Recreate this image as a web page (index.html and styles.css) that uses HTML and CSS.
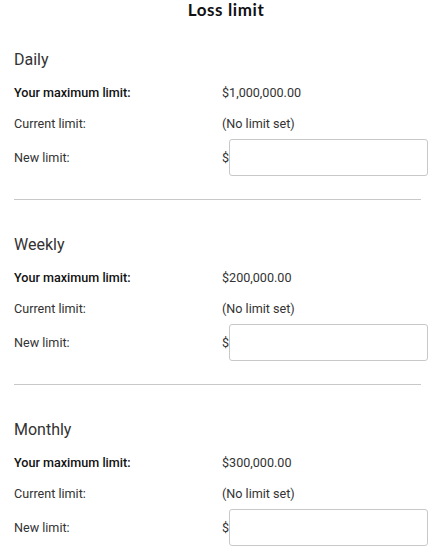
FILE: index.html
```html
<!DOCTYPE html>
<html>
<head>
<meta charset="utf-8">
<link rel="stylesheet" href="styles.css">
</head>
<body>
<h1 class="title">Loss limit</h1>
<div class="periods">
  <section class="period">
    <h2 class="period-name">Daily</h2>
    <div class="row"><span class="label strong">Your maximum limit:</span><span class="value">$1,000,000.00</span></div>
    <div class="row"><span class="label">Current limit:</span><span class="value">(No limit set)</span></div>
    <div class="row input-row"><span class="label">New limit:</span><span class="currency">$</span><input class="amount" type="text"></div>
  </section>
  <hr class="divider">
  <section class="period">
    <h2 class="period-name">Weekly</h2>
    <div class="row"><span class="label strong">Your maximum limit:</span><span class="value">$200,000.00</span></div>
    <div class="row"><span class="label">Current limit:</span><span class="value">(No limit set)</span></div>
    <div class="row input-row"><span class="label">New limit:</span><span class="currency">$</span><input class="amount" type="text"></div>
  </section>
  <hr class="divider">
  <section class="period">
    <h2 class="period-name">Monthly</h2>
    <div class="row"><span class="label strong">Your maximum limit:</span><span class="value">$300,000.00</span></div>
    <div class="row"><span class="label">Current limit:</span><span class="value">(No limit set)</span></div>
    <div class="row input-row"><span class="label">New limit:</span><span class="currency">$</span><input class="amount" type="text"></div>
  </section>
</div>
</body>
</html>
```
FILE: styles.css
```css
html, body {
  margin: 0;
  padding: 0;
  background: #fff;
}
body {
  font-family: Roboto, "Liberation Sans", sans-serif;
  color: #333;
  width: 438px;
}
.title {
  margin: 0;
  font-family: Lato, "Liberation Sans", sans-serif;
  font-weight: 700;
  font-size: 17px;
  letter-spacing: 0.6px;
  line-height: 20px;
  height: 20px;
  text-align: center;
  color: #111;
  padding-left: 14px;
}
.periods {
  padding: 0 10px 0 14px;
}
.period {
  display: flex;
  flex-direction: column;
}
.period:first-child {
  padding-top: 29px;
}
.period-name {
  margin: 0 0 6px 0;
  font-weight: 400;
  font-size: 16px;
  line-height: 22px;
  color: #333;
}
.row {
  display: flex;
  align-items: center;
  height: 31px;
  font-size: 12.6px;
}
.label {
  width: 208px;
  flex: none;
  color: #333;
}
.label.strong {
  font-weight: 500;
  color: #111;
}
.value {
  color: #333;
}
.input-row {
  height: 37px;
}
.currency {
  width: 7px;
  flex: none;
  color: #333;
}
.amount {
  box-sizing: border-box;
  width: 199px;
  height: 37px;
  margin: 0;
  border: 1px solid #c8c8c8;
  border-radius: 3px;
  background: #fff;
  outline: none;
  padding: 0 8px;
  font: inherit;
}
.divider {
  border: none;
  border-top: 1px solid #c8c8c8;
  height: 0;
  margin: 23px 7px 34px 0;
}
```
